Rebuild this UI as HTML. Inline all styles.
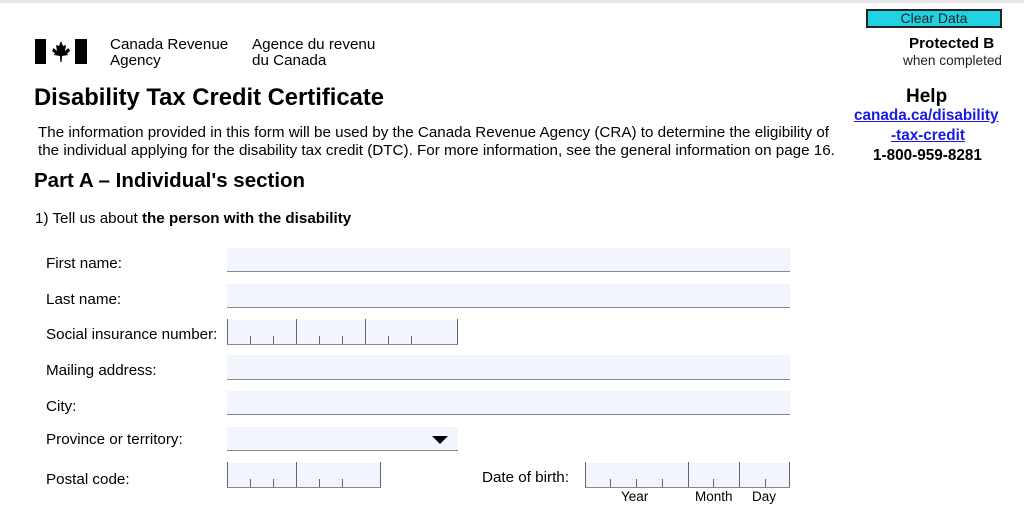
<!DOCTYPE html>
<html><head><meta charset="utf-8"><style>
body{margin:0;width:1024px;height:509px;background:#fff;position:relative;overflow:hidden;font-family:"Liberation Sans",Arial,sans-serif;color:#000}
.a{position:absolute;white-space:nowrap}
.f{position:absolute;background:#f2f5fd;border-bottom:1.5px solid #888}
.lb{position:absolute;font-size:15.2px;left:46px}
.t{position:absolute;bottom:0;width:1px;background:#666;height:8px}
.T{position:absolute;bottom:0;width:1px;background:#666;height:25px}
</style></head><body>
<div class="a" style="left:0;top:0;width:1024px;height:3px;background:#e6e6e6"></div>
<svg class="a" style="left:35px;top:39px" width="52" height="25" viewBox="0 0 52 25"><rect x="0" y="0" width="11" height="25"/><rect x="40" y="0" width="12" height="25"/><path d="M26 2 L28 7 L31 6 L30 12 L33.5 9 L35 12 L32 14.5 L33 16 L27 17 L26.6 23 L25.4 23 L25 17 L19 16 L20 14.5 L17 12 L18.5 9 L22 12 L21 6 L24 7 Z"/></svg>
<div class="a" style="left:110px;top:37px;font-size:15.2px;line-height:16px">Canada Revenue<br>Agency</div>
<div class="a" style="left:252px;top:37px;font-size:15.2px;line-height:16px">Agence du revenu<br>du Canada</div>
<div class="a" style="left:34px;top:84px;font-size:23.8px;font-weight:bold">Disability Tax Credit Certificate</div>
<div class="a" style="left:38px;top:124px;font-size:15.2px;line-height:18px">The information provided in this form will be used by the Canada Revenue Agency (CRA) to determine the eligibility of<br>the individual applying for the disability tax credit (DTC). For more information, see the general information on page 16.</div>
<div class="a" style="left:34px;top:169px;font-size:20.5px;font-weight:bold">Part A – Individual's section</div>
<div class="a" style="left:35px;top:210px;font-size:15.2px">1) Tell us about <b>the person with the disability</b></div>
<div class="a" style="left:866px;top:9px;width:132px;height:15px;background:#1fd3e3;border:2px solid #222;font-size:14px;text-align:center;line-height:15px;color:#222">Clear Data</div>
<div class="a" style="left:909px;top:35px;font-size:15.2px;font-weight:bold">Protected B</div>
<div class="a" style="left:903px;top:53px;font-size:13.6px;color:#222">when completed</div>
<div class="a" style="left:906px;top:86px;font-size:19px;font-weight:bold">Help</div>
<div class="a" style="left:854px;top:107px;font-size:15.3px;font-weight:bold;color:#1a1ae6;text-decoration:underline">canada.ca/disability</div>
<div class="a" style="left:891px;top:127px;font-size:15.3px;font-weight:bold;color:#1a1ae6;text-decoration:underline">-tax-credit</div>
<div class="a" style="left:873px;top:147px;font-size:15.3px;font-weight:bold">1-800-959-8281</div>

<div class="lb" style="top:255px">First name:</div>
<div class="f" style="left:227px;top:248px;width:563px;height:23px"></div>
<div class="lb" style="top:291px">Last name:</div>
<div class="f" style="left:227px;top:284px;width:563px;height:23px"></div>
<div class="lb" style="top:326px">Social insurance number:</div>
<div class="f" style="left:227px;top:320px;width:231px;height:24px">
<div class="T" style="left:0"></div><div class="t" style="left:23px"></div><div class="t" style="left:46px"></div><div class="T" style="left:69px"></div><div class="t" style="left:92px"></div><div class="t" style="left:115px"></div><div class="T" style="left:138px"></div><div class="t" style="left:161px"></div><div class="t" style="left:184px"></div><div class="T" style="left:230px"></div></div>
<div class="lb" style="top:362px">Mailing address:</div>
<div class="f" style="left:227px;top:355px;width:563px;height:24px"></div>
<div class="lb" style="top:398px">City:</div>
<div class="f" style="left:227px;top:391px;width:563px;height:23px"></div>
<div class="lb" style="top:431px">Province or territory:</div>
<div class="f" style="left:227px;top:427px;width:231px;height:23px"><div class="a" style="left:205px;top:9px;width:0;height:0;border-left:8px solid transparent;border-right:8px solid transparent;border-top:8px solid #000"></div></div>
<div class="lb" style="top:471px">Postal code:</div>
<div class="f" style="left:227px;top:463px;width:154px;height:24px">
<div class="T" style="left:0"></div><div class="t" style="left:23px"></div><div class="t" style="left:46px"></div><div class="T" style="left:69px"></div><div class="t" style="left:92px"></div><div class="t" style="left:115px"></div><div class="T" style="left:153px"></div></div>
<div class="a" style="left:482px;top:469px;font-size:15.2px">Date of birth:</div>
<div class="f" style="left:585px;top:463px;width:205px;height:24px">
<div class="T" style="left:0"></div><div class="t" style="left:25px"></div><div class="t" style="left:51px"></div><div class="t" style="left:77px"></div><div class="T" style="left:103px"></div><div class="t" style="left:128px"></div><div class="T" style="left:154px"></div><div class="t" style="left:180px"></div><div class="T" style="left:204px"></div></div>
<div class="a" style="left:621px;top:489px;font-size:13.5px">Year</div>
<div class="a" style="left:695px;top:489px;font-size:13.5px">Month</div>
<div class="a" style="left:752px;top:489px;font-size:13.5px">Day</div>
</body></html>
